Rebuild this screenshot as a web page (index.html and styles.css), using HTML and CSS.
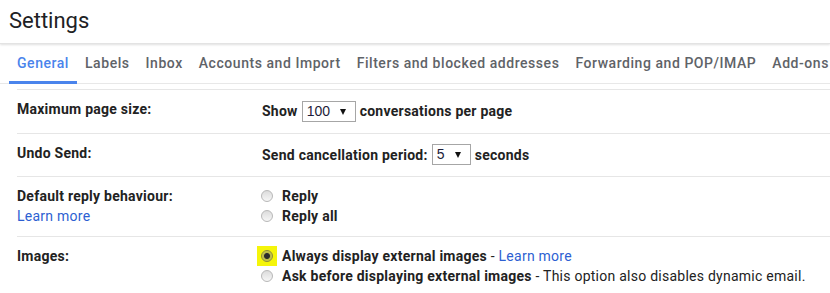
FILE: index.html
```html
<html>
<head>
<title>Settings</title>
<link rel="stylesheet" href="styles.css">
</head>
<body>

<div class="header">
	<h1>Settings</h1>
</div>

<div class="tabs">
	<a class="tab active">General</a>
	<a class="tab">Labels</a>
	<a class="tab">Inbox</a>
	<a class="tab">Accounts and Import</a>
	<a class="tab">Filters and blocked addresses</a>
	<a class="tab">Forwarding and POP/IMAP</a>
	<a class="tab">Add-ons</a>
</div>

<div class="settings">

	<div class="row">
		<div class="label">Maximum page size:</div>
		<div class="value inline tall">
			<b>Show</b>
			<span class="select wide">100<span class="caret"></span></span>
			<b>conversations per page</b>
		</div>
	</div>

	<div class="row">
		<div class="label">Undo Send:</div>
		<div class="value inline">
			<b>Send cancellation period:</b>
			<span class="select">5<span class="caret"></span></span>
			<b>seconds</b>
		</div>
	</div>

	<div class="row">
		<div class="label">
			Default reply behaviour:<br>
			<a class="link">Learn more</a>
		</div>
		<div class="value">
			<label class="option"><span class="radio"></span><b>Reply</b></label>
			<label class="option"><span class="radio"></span><b>Reply all</b></label>
		</div>
	</div>

	<div class="row">
		<div class="label">Images:</div>
		<div class="value">
			<label class="option"><span class="mark"><span class="radio checked"></span></span><span><b>Always display external images</b> - <a class="link">Learn more</a></span></label>
			<label class="option"><span class="radio"></span><span><b>Ask before displaying external images</b> - This option also disables dynamic email.</span></label>
		</div>
	</div>

</div>

</body>
</html>
```

FILE: styles.css
```css
body {
  margin: 0;
  font-family: Roboto, "Liberation Sans", sans-serif;
  font-size: 14px;
  letter-spacing: 0.25px;
  color: #222;
  background: #fff;
  overflow: hidden;
}

.header {
  height: 43px;
  border-bottom: 1px solid #e3e3e3;
  box-shadow: 0 1px 2px rgba(0, 0, 0, 0.12);
}
.header h1 {
  margin: 0;
  padding: 7px 0 0 9px;
  font-size: 22px;
  font-weight: 400;
  letter-spacing: 0;
  line-height: 28px;
  color: #202124;
}

.tabs {
  display: flex;
  margin-top: 1px;
  height: 38px;
  border-bottom: 1px solid #e8e8e8;
  padding-left: 9px;
  white-space: nowrap;
}
.tab {
  display: flex;
  align-items: center;
  padding: 0 8px;
  height: 36px;
  margin-bottom: -1px;
  border-bottom: 3px solid transparent;
  color: #5f6368;
  font-weight: 500;
  letter-spacing: 0.55px;
}
.tab.active {
  color: #4a84ec;
  border-bottom-color: #4a84ec;
}

.settings {
  margin: 5px 0 0 17px;
}
.row {
  display: grid;
  grid-template-columns: 245px 1fr;
  border-top: 1px solid #e6e6e6;
  padding: 9px 0 10px;
  line-height: 20px;
}
.label {
  font-weight: bold;
}
.value.inline {
  display: flex;
  align-items: center;
  min-height: 23px;
  white-space: nowrap;
}
.value.tall {
  min-height: 24px;
}

.select {
  position: relative;
  display: inline-block;
  box-sizing: border-box;
  width: 39px;
  height: 21px;
  margin: 0 4px;
  padding-left: 4px;
  border: 1px solid #a6a6a6;
  font-family: "Liberation Sans", Arial, sans-serif;
  font-size: 14px;
  letter-spacing: 0;
  line-height: 19px;
  color: #1d1d3a;
}
.select.wide {
  width: 54px;
}
.caret {
  position: absolute;
  right: 9px;
  top: 7px;
  border-left: 3px solid transparent;
  border-right: 3px solid transparent;
  border-top: 6px solid #111;
}

.option {
  display: flex;
  align-items: center;
  gap: 9px;
  margin-left: -1px;
  white-space: nowrap;
}
.radio {
  display: inline-block;
  box-sizing: border-box;
  width: 12px;
  height: 12px;
  border-radius: 50%;
  border: 1px solid #b8b8b8;
  background: linear-gradient(#dcdcdc, #f6f6f6);
}
.radio.checked {
  border-color: #8a8a3a;
  background: radial-gradient(circle, #2b2b2b 0, #2b2b2b 2.5px, #b9b94a 3.5px, #d9d94a 6px);
}
.mark {
  display: inline-flex;
  padding: 4px;
  margin: -4px;
  background: #f5f50a;
}

.link {
  color: #2d5fd2;
  font-weight: normal;
  text-decoration: none;
}
```
